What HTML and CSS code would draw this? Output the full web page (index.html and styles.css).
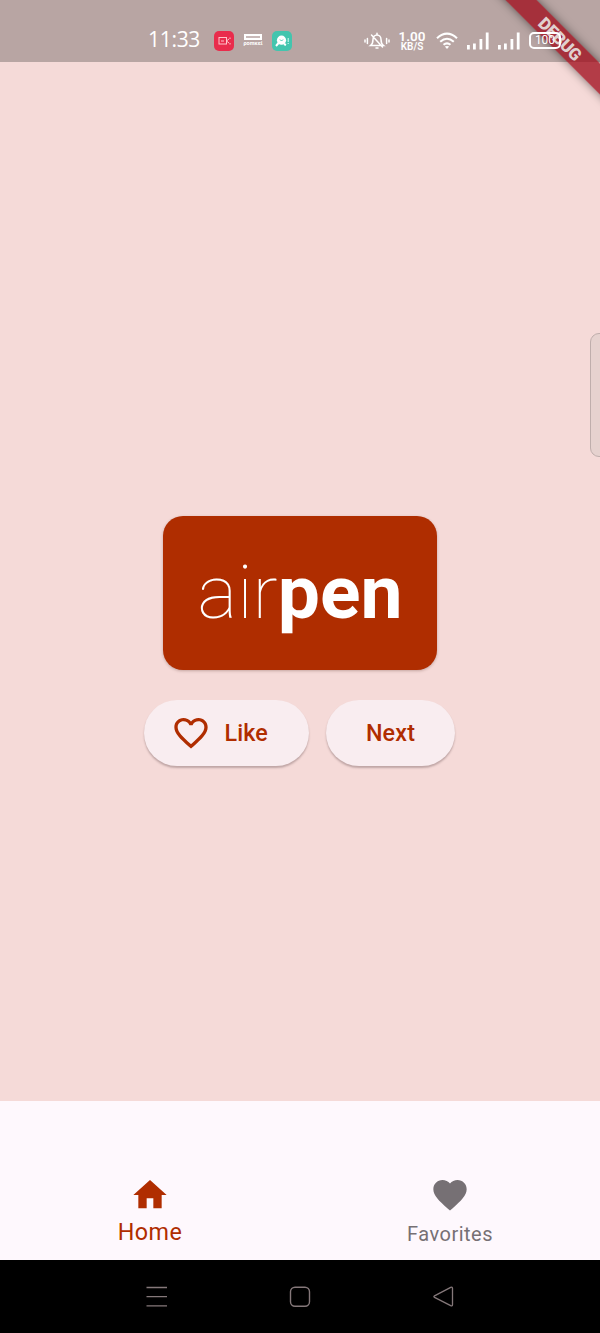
FILE: index.html
```html
<!DOCTYPE html>
<html lang="en">
<head>
<meta charset="utf-8">
<title>airpen</title>
<link rel="stylesheet" href="styles.css">
</head>
<body>
<div class="phone">
  <header class="status">
    <span class="clock">11:33</span>
    <svg class="app-icon" width="22" height="22" viewBox="0 0 22 22"><rect x="1" y="1" width="20" height="20" rx="5" fill="#e92c4c"/><rect x="6" y="7.5" width="7.5" height="6.5" fill="none" stroke="#ffc4cb"/><path d="M8 11h3M13.500 11l2.500-2M13.500 11l2.500 2M17 7.500v1.500M17 13v1.500" stroke="#ffc4cb" fill="none"/></svg>
    <span class="brand"><span class="brand-bar"></span><span class="brand-name">ρomκεί</span></span>
    <svg class="app-icon" width="22" height="22" viewBox="0 0 22 22"><rect x="1" y="1" width="20" height="20" rx="5" fill="#43c5ae"/><circle cx="10.500" cy="10.200" r="4.600" fill="#fff"/><path d="M7.500 13l-2.500 3M13 14l2 1" stroke="#fff" stroke-width="2" fill="none"/><path d="M9 9.500l1.500 1.500 1.500-1.500" stroke="#43c5ae" fill="none"/><path d="M17.2 8v4M17.2 13v1" stroke="#d8fff7"/></svg>
    <svg class="mute" width="26" height="20" viewBox="0 0 26 20" fill="none" stroke="#fff" stroke-width="1.500" stroke-linecap="round"><path d="M1 9v2M3.400 7.500v5M22.600 7.500v5M25 9v2"/><path d="M6.500 14.500h13c-2-1.500-2.500-3-2.500-6 0-2.500-1.700-4.500-4-4.500s-4 2-4 4.500c0 3-.5 4.500-2.500 6zM13 2.300v1.500M12 17h2M7.500 4l11 12"/></svg>
    <span class="speed"><b class="speed-value">1.00</b><b class="speed-unit">KB/S</b></span>
    <svg class="wifi" width="22" height="18" viewBox="0 0 22 18" fill="none" stroke="#fff" stroke-width="2.100"><path d="M1 6.200Q11-2.800 21 6.200M4.200 9.700Q11 3.800 17.800 9.700M7.500 12.800Q11 10 14.500 12.800"/><path d="M8.800 14.600L11 17l2.200-2.400Q11 13.300 8.800 14.600z" fill="#fff" stroke="none"/></svg>
    <svg class="signal" width="22" height="18" viewBox="0 0 22 18" fill="#fff"><path d="M0 13h2.800v4.500H0zM6 11.500h2.800v6H6zM12.500 7h2.800v10.500h-2.800zM18.800.500h2.800v17h-2.800z"/></svg>
    <svg class="signal" width="22" height="18" viewBox="0 0 22 18" fill="#fff"><path d="M0 13h2.800v4.500H0zM6 11.500h2.800v6H6zM12.500 7h2.800v10.500h-2.800zM18.800.500h2.800v17h-2.800z"/></svg>
    <span class="battery">100</span>
  </header>
  <div class="debug">DEBUG</div>
  <div class="edge-handle"></div>
  <main class="stage">
    <div class="card"><span class="thin">air</span><span class="bold">pen</span></div>
    <div class="actions">
      <button class="pill like"><svg width="40" height="40" viewBox="0 0 24 24" fill="currentColor"><path d="M16.500 3c-1.740 0-3.410.810-4.500 2.090C10.910 3.810 9.240 3 7.500 3 4.420 3 2 5.420 2 8.500c0 3.780 3.400 6.860 8.550 11.540L12 21.350l1.450-1.320C18.600 15.360 22 12.280 22 8.500 22 5.420 19.580 3 16.500 3zm-4.400 15.550l-.100.100-.100-.100C7.140 14.240 4 11.390 4 8.500 4 6.500 5.500 5 7.500 5c1.540 0 3.040.990 3.570 2.360h1.870C13.460 5.990 14.960 5 16.500 5c2 0 3.500 1.500 3.500 3.500 0 2.890-3.140 5.740-7.900 10.050z"/></svg>Like</button>
      <button class="pill next">Next</button>
    </div>
  </main>
  <nav class="tabs">
    <div class="tab active"><svg width="40" height="40" viewBox="0 0 24 24" fill="currentColor"><path d="M10 20v-6h4v6h5v-8h3L12 3 2 12h3v8z"/></svg><span>Home</span></div>
    <div class="tab"><svg width="40" height="40" viewBox="0 0 24 24" fill="currentColor"><path d="M12 21.350l-1.450-1.320C5.400 15.360 2 12.280 2 8.500 2 5.420 4.420 3 7.500 3c1.740 0 3.410.810 4.500 2.090C13.090 3.810 14.760 3 16.500 3 19.580 3 22 5.420 22 8.500c0 3.780-3.400 6.860-8.550 11.540z"/></svg><span>Favorites</span></div>
  </nav>
  <footer class="system">
    <svg width="22" height="22" viewBox="0 0 22 22" fill="none" stroke="#85787a" stroke-width="1.300"><path d="M.500 1.500h20.500M.500 10.700h20.500M.500 19.900h20.500"/></svg>
    <svg width="22" height="22" viewBox="0 0 22 22" fill="none" stroke="#85787a" stroke-width="1.400"><rect x="1.500" y="1.200" width="19" height="19" rx="4.500"/></svg>
    <svg width="22" height="22" viewBox="0 0 22 22" fill="none" stroke="#85787a" stroke-width="1.300" stroke-linejoin="round"><path d="M2.500 9.800L18.700 1.400q1.800-.8 1.800 1.200v15.800q0 2-1.800 1.200L2.500 11.400q-1.300-.8 0-1.600z"/></svg>
  </footer>
</div>
</body>
</html>
```
FILE: styles.css
```css
* { box-sizing: border-box; }
body { margin: 0; font-family: Roboto, "Noto Sans", sans-serif; }
svg { display: block; flex: none; }
.phone {
  position: relative;
  width: 600px;
  height: 1333px;
  display: flex;
  flex-direction: column;
  overflow: hidden;
  background: #f5dad8;
}
.status {
  height: 62px;
  flex: none;
  display: flex;
  align-items: center;
  padding: 19px 0 0 148px;
  background: #b8a5a3;
  color: #fff;
}
.clock { width: 65px; padding-bottom: 3px; font: 400 21px/24px "Open Sans", sans-serif; letter-spacing: -.3px; }
.brand { width: 20px; margin: 0 8px; }
.brand-bar { display: block; width: 18px; height: 6px; margin: 0 auto; border: 2px solid #fff; background: #c9b9b8; }
.brand-name { display: block; font-size: 5.500px; font-weight: 700; line-height: 7px; text-align: center; }
.mute { margin-left: 71px; }
.speed { width: 28px; margin-left: 8px; text-align: center; }
.speed-value, .speed-unit { display: block; font-weight: 600; }
.speed-value { font-size: 13.500px; line-height: 12px; }
.speed-unit { font-size: 10px; line-height: 10px; }
.wifi { margin-left: 10px; }
.signal { margin-left: 9px; }
.battery {
  width: 32px;
  height: 17px;
  margin-left: 9px;
  border: 2px solid #fff;
  border-radius: 5px;
  font-size: 12px;
  line-height: 13px;
  text-align: center;
  position: relative;
  z-index: 2;
}
.debug {
  position: absolute;
  left: 460px;
  top: 28px;
  width: 200px;
  height: 22px;
  transform: rotate(45deg);
  background: rgba(160, 15, 30, .78);
  box-shadow: 0 0 10px rgba(0, 0, 0, .5);
  color: #e0d0cf;
  font-size: 17px;
  font-weight: 900;
  letter-spacing: -.3px;
  line-height: 22px;
  text-align: center;
}
.edge-handle {
  position: absolute;
  left: 590px;
  top: 333px;
  width: 20px;
  height: 124px;
  border: 1px solid #bfaeac;
  border-radius: 9px;
  background: #e6d2cf;
}
.stage { height: 1039px; flex: none; display: flex; flex-direction: column; align-items: center; padding-top: 454px; }
.card {
  width: 274px;
  height: 154px;
  border-radius: 20px;
  background: #af2d00;
  box-shadow: 0 1px 3px rgba(80, 40, 30, .3);
  color: #fff;
  font-size: 75px;
  line-height: 152px;
  text-align: center;
  white-space: nowrap;
}
.thin { font-weight: 100; }
.bold { font-weight: 700; }
.actions { display: flex; gap: 17px; margin: 30px 1px 0 0; }
.pill {
  display: flex;
  align-items: center;
  justify-content: center;
  height: 66px;
  padding: 0;
  border: 0;
  border-radius: 33px;
  background: #f9edf0;
  box-shadow: 0 2px 2px rgba(70, 45, 50, .3);
  color: #b02d00;
  font: 500 23.300px Roboto, sans-serif;
  letter-spacing: .17px;
}
.like { width: 165px; gap: 13px; justify-content: flex-end; padding-right: 41px; }
.next { width: 129px; }
.tabs { height: 159px; flex: none; display: flex; padding-top: 74px; background: #fef8fd; }
.tab {
  flex: 1;
  display: flex;
  flex-direction: column;
  align-items: center;
  color: #767074;
  font-size: 20px;
  letter-spacing: .5px;
  line-height: 38px;
}
.active { color: #b02d00; font-size: 23.300px; line-height: 34px; }
.system { flex: 1; display: flex; justify-content: space-between; align-items: center; padding: 0 146px; background: #000; }
```
